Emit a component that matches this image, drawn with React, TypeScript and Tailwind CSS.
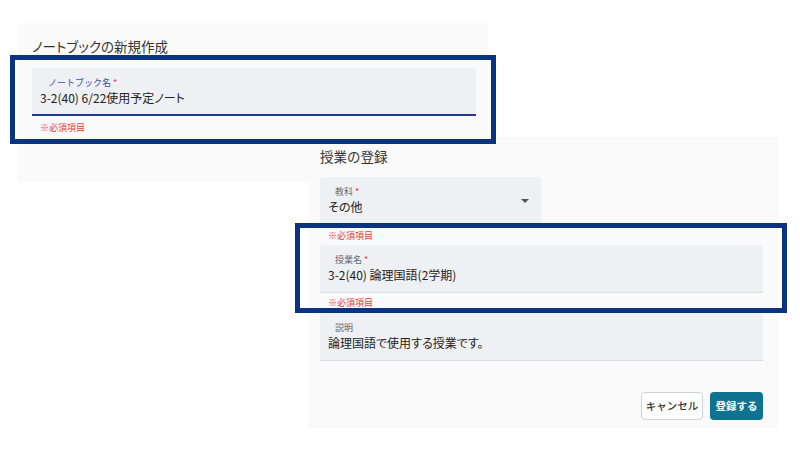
import React from "react";

const font = { fontFamily: '"Noto Sans CJK JP", "Noto Sans", sans-serif' };

function Helper({ className = "" }: { className?: string }) {
  return <div className={`text-[9px] leading-[12px] text-[#e53935] ${className}`}>※必須項目</div>;
}

function Field({
  label,
  value,
  focused = false,
  required = true,
  className = "",
  labelIndent = "pl-[15px]",
  children,
}: {
  label: string;
  value: string;
  focused?: boolean;
  required?: boolean;
  className?: string;
  labelIndent?: string;
  children?: React.ReactNode;
}) {
  return (
    <div
      className={`relative h-[48px] rounded-t-[4px] bg-[#eef0f3] pt-[9px] ${
        focused ? "border-b-2 border-[#1f3b8c]" : "border-b border-[#d9dce1]"
      } ${className}`}
    >
      <div className={`${labelIndent} text-[9px] leading-[12px] ${focused ? "text-[#3d4fb0]" : "text-[#666a70]"}`}>
        {label}
        {required && <span className="text-[#e53935]"> *</span>}
      </div>
      <div className="pl-[8px] text-[12px] leading-[18px] text-[#222] [font-feature-settings:'palt']">{value}</div>
      {children}
    </div>
  );
}

export default function App() {
  return (
    <div className="relative h-[450px] w-[800px] overflow-hidden bg-white" style={font}>
      {/* Panel 1 */}
      <div className="absolute left-[18px] top-[23px] flex h-[159px] w-[470px] flex-col bg-[#fafafa] pl-[14px] pr-[12px] pt-[14px]">
        <div className="text-[13.5px] leading-[18px] text-[#333] [font-feature-settings:'palt']">ノートブックの新規作成</div>
        <Field
          label="ノートブック名"
          value="3-2(40) 6/22使用予定ノート"
          focused
          labelIndent="pl-[16px]"
          className="mt-[13px]"
        />
        <Helper className="mt-[6px] pl-[8px]" />
      </div>

      {/* Panel 2 */}
      <div className="absolute left-[308px] top-[137px] flex h-[291px] w-[470px] flex-col bg-[#fafafa] px-[12px] pt-[10px]">
        <div className="text-[13.5px] leading-[18px] text-[#333]">授業の登録</div>
        <Field label="教科" value="その他" className="mt-[12px] w-[221px]">
          <div className="absolute right-[12px] top-[22px] h-0 w-0 border-x-[4px] border-t-[4px] border-x-transparent border-t-[#555]" />
        </Field>
        <Helper className="mt-[5px] pl-[8px]" />
        <Field label="授業名" value="3-2(40) 論理国語(2学期)" className="mt-[3px] w-[443px]" />
        <Helper className="mt-[4px] pl-[8px]" />
        <Field label="説明" value="論理国語で使用する授業です。" required={false} className="mt-[4px] w-[443px]" />
        <div className="mt-[31px] flex w-[443px] justify-end gap-[7px]">
          <button className="h-[28px] w-[62px] rounded-[4px] border border-[#cfd2d6] bg-white text-[10.5px] font-medium text-[#333]">
            キャンセル
          </button>
          <button className="h-[28px] w-[53px] rounded-[4px] bg-[#0d7391] text-[10.5px] font-bold text-white">
            登録する
          </button>
        </div>
      </div>

      {/* Highlight rectangles */}
      <div className="pointer-events-none absolute left-[10px] top-[55px] h-[89px] w-[486px] border-[5px] border-[#0a3382]" />
      <div className="pointer-events-none absolute left-[295px] top-[223px] h-[90px] w-[492px] border-[5px] border-[#0a3382]" />
    </div>
  );
}
